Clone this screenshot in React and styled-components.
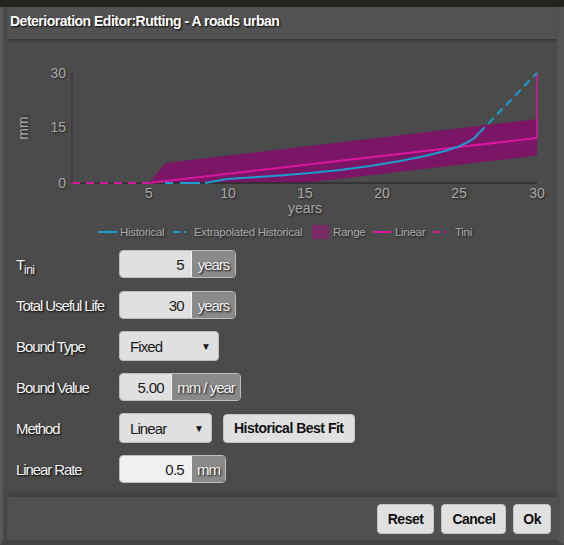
import React from "react";
import styled, { createGlobalStyle } from "styled-components";

const GlobalStyle = createGlobalStyle`
  html, body {
    margin: 0;
    padding: 0;
    background: #22221f;
  }
  body {
    font-family: "Liberation Sans", Arial, sans-serif;
  }
`;

const Window = styled.div`
  width: 564px;
  height: 545px;
  padding-top: 7px;
  box-sizing: border-box;
  background: #22221f;
  overflow: hidden;
`;

const Dialog = styled.div`
  height: 538px;
  background: #4b4b4b;
  border-left: 3px solid #5a5a5a;
  border-right: 7px solid #555555;
  border-bottom: 5px solid #434343;
  padding-left: 4px;
  display: flex;
  flex-direction: column;
  box-sizing: border-box;

  & > * {
    flex-shrink: 0;
  }
`;

const Header = styled.div`
  height: 32px;
  background: #525252;
  box-shadow: 0 2px 3px rgba(0, 0, 0, 0.25);
  display: flex;
  align-items: center;
  padding-left: 3px;
  padding-bottom: 4px;
  box-sizing: border-box;
  color: #fff;
  font-weight: bold;
  font-size: 14px;
  letter-spacing: -0.5px;
  text-shadow: 1px 1px 2px #000;
`;

const ChartSvg = styled.svg`
  display: block;
  width: 550px;
  height: 206px;
  font-family: "Liberation Sans", Arial, sans-serif;

  text {
    text-shadow: 1px 1px 2px rgba(0, 0, 0, 0.6);
  }
`;

const Form = styled.div`
  display: flex;
  flex-direction: column;
  gap: 13px;
  padding: 5px 0 0 9px;
`;

const Row = styled.div`
  display: flex;
  align-items: center;
  height: 28px;
`;

const Label = styled.div`
  width: 103px;
  color: #f4f4f4;
  font-size: 15px;
  letter-spacing: -1.1px;
  text-shadow: 1px 1px 2px #000;

  sub {
    font-size: 12px;
    vertical-align: -4px;
    line-height: 0;
    letter-spacing: -0.6px;
  }
`;

const BigT = styled.span`
  font-size: 15px;
`;

const Group = styled.div`
  display: flex;
  height: 28px;
  border: 1px solid #bdbdbd;
  border-radius: 4px;
  overflow: hidden;
  box-sizing: border-box;
`;

const Value = styled.div`
  width: ${(p) => p.$w}px;
  background: ${(p) => (p.$light ? "#f0f0f0" : "#e0e0e0")};
  color: #1a1a1a;
  font-size: 15px;
  letter-spacing: -0.7px;
  display: flex;
  align-items: center;
  justify-content: flex-end;
  padding-right: 7px;
  box-sizing: border-box;
  border-right: 1px solid #f4f4f4;
`;

const Unit = styled.div`
  width: ${(p) => p.$w}px;
  background: #8a8a8a;
  color: #f2f2f2;
  font-size: 15px;
  letter-spacing: -1px;
  display: flex;
  align-items: center;
  justify-content: center;
  text-shadow: 1px 1px 2px #000;
  box-sizing: border-box;
`;

const Select = styled.div`
  width: ${(p) => p.$w}px;
  height: 30px;
  background: #e0e0e0;
  border: 1px solid #bdbdbd;
  border-radius: 4px;
  box-sizing: border-box;
  display: flex;
  align-items: center;
  justify-content: space-between;
  padding: 0 8px 0 10px;
  color: #1a1a1a;
  font-size: 15px;
  letter-spacing: -0.9px;

  span:last-child {
    font-size: 10px;
  }
`;

const Button = styled.button`
  height: ${(p) => (p.$tall ? 30 : 29)}px;
  padding: 0 ${(p) => p.$px || 10}px;
  margin-left: ${(p) => p.$ml || 0}px;
  background: #e0e0e0;
  border: 1px solid #c4c4c4;
  border-radius: 4px;
  color: #111;
  font-family: "Liberation Sans", Arial, sans-serif;
  font-size: 14px;
  font-weight: bold;
  letter-spacing: -0.5px;
  cursor: pointer;
`;

const Footer = styled.div`
  margin-top: 14px;
  height: 43px;
  background: #505050;
  box-shadow: 0 -3px 6px rgba(0, 0, 0, 0.2);
  display: flex;
  justify-content: flex-end;
  align-items: center;
  gap: 7px;
  padding-right: 6px;
`;

const histPts =
  "205,183 227,179 250,177.5 280,175.5 310,173 340,170 370,166 400,161 425,156 445,151 460,146 470,141 475,137.5 479,133";

const Chart = () => (
  <ChartSvg viewBox="7 39 550 206">
    {/* range */}
    <polygon
      points="149,183 165.5,163 537,119 537,155.5 305,183"
      fill="#7b1566"
    />
    {/* axes */}
    <line x1="72" y1="73" x2="72" y2="183" stroke="#2c2c2c" strokeWidth="1" />
    <line x1="72" y1="183" x2="537" y2="183" stroke="#2c2c2c" strokeWidth="1.5" />
    {/* tini */}
    <line x1="72" y1="183" x2="149" y2="183" stroke="#d8169e" strokeWidth="2" strokeDasharray="8 6" />
    {/* linear */}
    <line x1="149" y1="183" x2="537" y2="138" stroke="#d8169e" strokeWidth="2" />
    <line x1="537" y1="138" x2="537" y2="73" stroke="#d8169e" strokeWidth="1.5" />
    {/* historical */}
    <line x1="165" y1="183" x2="205" y2="183" stroke="#1a9ecf" strokeWidth="2" strokeDasharray="8 7 20 5" />
    <polyline points={histPts} fill="none" stroke="#1a9ecf" strokeWidth="2" />
    <line x1="479" y1="133" x2="537" y2="73" stroke="#1a9ecf" strokeWidth="2" strokeDasharray="8 5" />

    <g fill="#a9a9a9" fontSize="14">
      <text x="66" y="78" textAnchor="end">30</text>
      <text x="66" y="132" textAnchor="end">15</text>
      <text x="66" y="188" textAnchor="end">0</text>
      {[
        [149, 5],
        [228, 10],
        [305, 15],
        [382, 20],
        [459, 25],
        [537, 30],
      ].map(([x, v]) => (
        <text key={v} x={x} y="198" textAnchor="middle">{v}</text>
      ))}
      <text x="305" y="213" textAnchor="middle">years</text>
      <text x="0" y="0" textAnchor="middle" transform="translate(28 128) rotate(-90)">mm</text>
    </g>

    {/* legend */}
    <g fontSize="11.5" fill="#a9a9a9" letterSpacing="-0.3">
      <line x1="98" y1="232" x2="117" y2="232" stroke="#1a9ecf" strokeWidth="2" />
      <text x="120" y="236">Historical</text>
      <line x1="173" y1="232" x2="191" y2="232" stroke="#1a9ecf" strokeWidth="2" strokeDasharray="7 4 2 10" />
      <text x="194" y="236">Extrapolated Historical</text>
      <rect x="312" y="225" width="17" height="14" fill="#7a2a66" />
      <text x="333" y="236">Range</text>
      <line x1="373" y1="232" x2="391" y2="232" stroke="#d8169e" strokeWidth="2" />
      <text x="395" y="236">Linear</text>
      <line x1="433" y1="232" x2="451" y2="232" stroke="#d8169e" strokeWidth="2" strokeDasharray="7 4 2 10" />
      <text x="455" y="236">Tini</text>
    </g>
  </ChartSvg>
);

export default function App() {
  return (
    <Window>
      <GlobalStyle />
      <Dialog>
        <Header>Deterioration Editor:Rutting - A roads urban</Header>
        <Chart />
        <Form>
          <Row>
            <Label>
              <BigT>T</BigT>
              <sub>ini</sub>
            </Label>
            <Group>
              <Value $w={72}>5</Value>
              <Unit $w={43}>years</Unit>
            </Group>
          </Row>
          <Row>
            <Label>Total Useful Life</Label>
            <Group>
              <Value $w={72}>30</Value>
              <Unit $w={43}>years</Unit>
            </Group>
          </Row>
          <Row>
            <Label>Bound Type</Label>
            <Select $w={100}>
              <span>Fixed</span>
              <span>▼</span>
            </Select>
          </Row>
          <Row>
            <Label>Bound Value</Label>
            <Group>
              <Value $w={52}>5.00</Value>
              <Unit $w={68}>mm / year</Unit>
            </Group>
          </Row>
          <Row>
            <Label>Method</Label>
            <Select $w={93}>
              <span>Linear</span>
              <span>▼</span>
            </Select>
            <Button $ml={11} $px={10}>
              Historical Best Fit
            </Button>
          </Row>
          <Row>
            <Label>Linear Rate</Label>
            <Group>
              <Value $w={72} $light>0.5</Value>
              <Unit $w={33}>mm</Unit>
            </Group>
          </Row>
        </Form>
        <Footer>
          <Button $tall $px={10}>Reset</Button>
          <Button $tall $px={10}>Cancel</Button>
          <Button $tall $px={9}>Ok</Button>
        </Footer>
      </Dialog>
    </Window>
  );
}
